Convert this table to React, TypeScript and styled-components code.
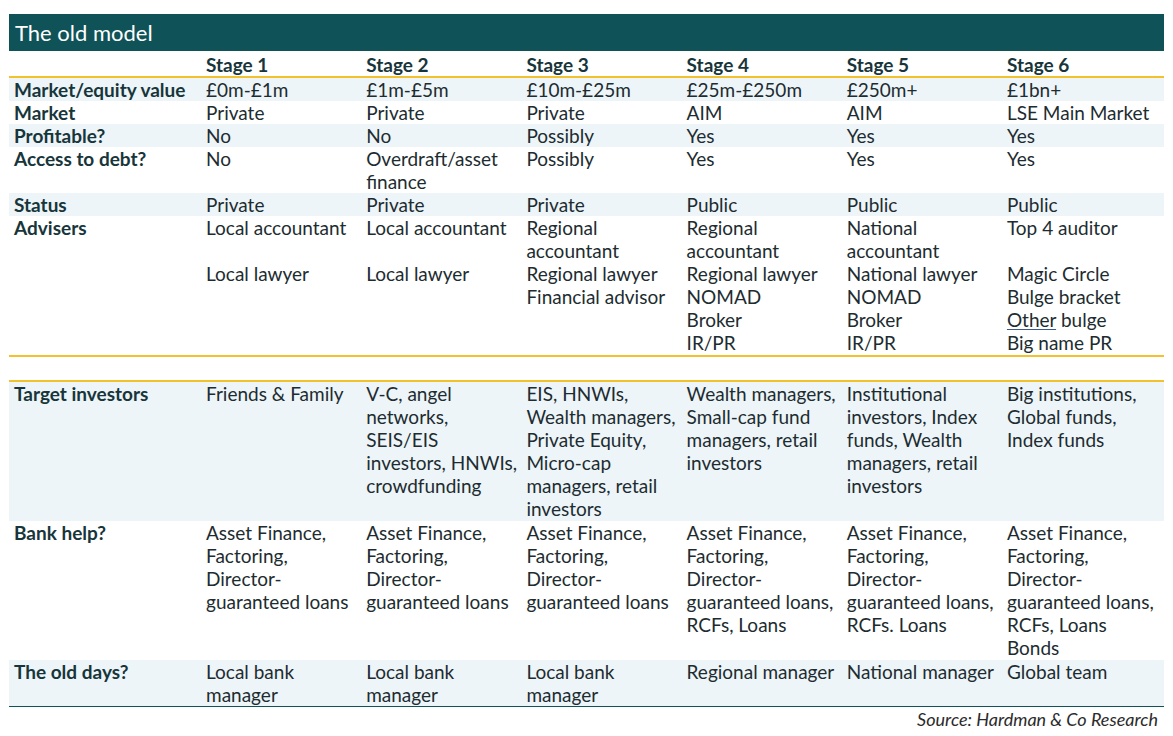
import React from 'react';
import styled, { createGlobalStyle } from 'styled-components';

const Colors = {
  teal: '#0f5358',
  ink: '#1d2c30',
  label: '#17353a',
  stripe: '#edf5f9',
  gold: '#f2c12e',
};

const GlobalStyle = createGlobalStyle`
  body {
    margin: 0;
    background: #ffffff;
    font-family: Lato, 'Open Sans', sans-serif;
    color: ${Colors.ink};
  }
`;

const Page = styled.div`
  padding: 14px 9px 0 9px;
  width: 1155px;
`;

const TitleBar = styled.div`
  height: 37px;
  background-color: ${Colors.teal};
  color: #ffffff;
  font-size: 22px;
  line-height: 38px;
  padding-left: 6px;
`;

const Row = styled.div<{ $shaded?: boolean }>`
  display: grid;
  grid-template-columns: 192px repeat(6, 160.2px);
  background-color: ${(p) => (p.$shaded ? Colors.stripe : '#ffffff')};
  font-size: 19px;
  line-height: 23px;
`;

const HeadRow = styled(Row)`
  height: 25px;
  line-height: 27px;
  border-bottom: 2px solid ${Colors.gold};
  font-weight: 700;
  color: ${Colors.label};
`;

const Label = styled.div`
  padding-left: 5px;
  font-weight: 700;
  color: ${Colors.label};
  white-space: nowrap;
`;

const Cell = styled.div`
  padding-left: 5px;
  white-space: nowrap;
`;

const Line = styled.div`
  min-height: 23px;
`;

const Linked = styled.span`
  text-decoration: underline;
  text-decoration-color: #3a5a8a;
  text-underline-offset: 2px;
`;

const Spacer = styled.div`
  height: 23px;
  border-top: 2px solid ${Colors.gold};
  border-bottom: 2px solid ${Colors.gold};
`;

const BottomRule = styled.div`
  border-top: 1.5px solid ${Colors.teal};
`;

const Source = styled.div`
  text-align: right;
  padding-right: 6px;
  font-size: 18px;
  font-style: italic;
  color: #2b2b2b;
  line-height: 25px;
`;

type Content = React.ReactNode[];

interface RowSpec {
  label: string;
  cells: Content[];
  shaded?: boolean;
}

const same = (lines: Content): Content[] => [lines, lines, lines];

const topRows: RowSpec[] = [
  {
    label: 'Market/equity value',
    shaded: true,
    cells: [['£0m-£1m'], ['£1m-£5m'], ['£10m-£25m'], ['£25m-£250m'], ['£250m+'], ['£1bn+']],
  },
  {
    label: 'Market',
    cells: [['Private'], ['Private'], ['Private'], ['AIM'], ['AIM'], ['LSE Main Market']],
  },
  {
    label: 'Profitable?',
    shaded: true,
    cells: [['No'], ['No'], ['Possibly'], ['Yes'], ['Yes'], ['Yes']],
  },
  {
    label: 'Access to debt?',
    cells: [['No'], ['Overdraft/asset', 'finance'], ['Possibly'], ['Yes'], ['Yes'], ['Yes']],
  },
  {
    label: 'Status',
    shaded: true,
    cells: [['Private'], ['Private'], ['Private'], ['Public'], ['Public'], ['Public']],
  },
  {
    label: 'Advisers',
    cells: [
      ['Local accountant', '', 'Local lawyer'],
      ['Local accountant', '', 'Local lawyer'],
      ['Regional', 'accountant', 'Regional lawyer', 'Financial advisor'],
      ['Regional', 'accountant', 'Regional lawyer', 'NOMAD', 'Broker', 'IR/PR'],
      ['National', 'accountant', 'National lawyer', 'NOMAD', 'Broker', 'IR/PR'],
      [
        'Top 4 auditor',
        '',
        'Magic Circle',
        'Bulge bracket',
        <>
          <Linked>Other</Linked> bulge
        </>,
        'Big name PR',
      ],
    ],
  },
];

const bankBase = ['Asset Finance,', 'Factoring,', 'Director-'];

const bottomRows: RowSpec[] = [
  {
    label: 'Target investors',
    shaded: true,
    cells: [
      ['Friends & Family'],
      ['V-C, angel', 'networks,', 'SEIS/EIS', 'investors, HNWIs,', 'crowdfunding'],
      ['EIS, HNWIs,', 'Wealth managers,', 'Private Equity,', 'Micro-cap', 'managers, retail', 'investors'],
      ['Wealth managers,', 'Small-cap fund', 'managers, retail', 'investors'],
      ['Institutional', 'investors, Index', 'funds, Wealth', 'managers, retail', 'investors'],
      ['Big institutions,', 'Global funds,', 'Index funds'],
    ],
  },
  {
    label: 'Bank help?',
    cells: [
      ...same([...bankBase, 'guaranteed loans']),
      [...bankBase, 'guaranteed loans,', 'RCFs, Loans'],
      [...bankBase, 'guaranteed loans,', 'RCFs. Loans'],
      [...bankBase, 'guaranteed loans,', 'RCFs, Loans', 'Bonds'],
    ],
  },
  {
    label: 'The old days?',
    shaded: true,
    cells: [
      ...same(['Local bank', 'manager']),
      ['Regional manager'],
      ['National manager'],
      ['Global team'],
    ],
  },
];

const TableRow = ({ spec }: { spec: RowSpec }) => {
  const lines = Math.max(...spec.cells.map((c) => c.length));
  return (
    <Row $shaded={spec.shaded} style={{ paddingBottom: lines > 2 ? 1 : 0 }}>
      <Label>{spec.label}</Label>
      {spec.cells.map((cell, i) => (
        <Cell key={i}>
          {cell.map((line, j) => (
            <Line key={j}>{line}</Line>
          ))}
        </Cell>
      ))}
    </Row>
  );
};

export default function App() {
  return (
    <>
      <GlobalStyle />
      <Page>
        <TitleBar>The old model</TitleBar>
        <HeadRow>
          <div />
          {[1, 2, 3, 4, 5, 6].map((n) => (
            <Cell key={n}>Stage {n}</Cell>
          ))}
        </HeadRow>
        {topRows.map((r) => (
          <TableRow key={r.label} spec={r} />
        ))}
        <Spacer />
        {bottomRows.map((r) => (
          <TableRow key={r.label} spec={r} />
        ))}
        <BottomRule />
        <Source>Source: Hardman &amp; Co Research</Source>
      </Page>
    </>
  );
}
